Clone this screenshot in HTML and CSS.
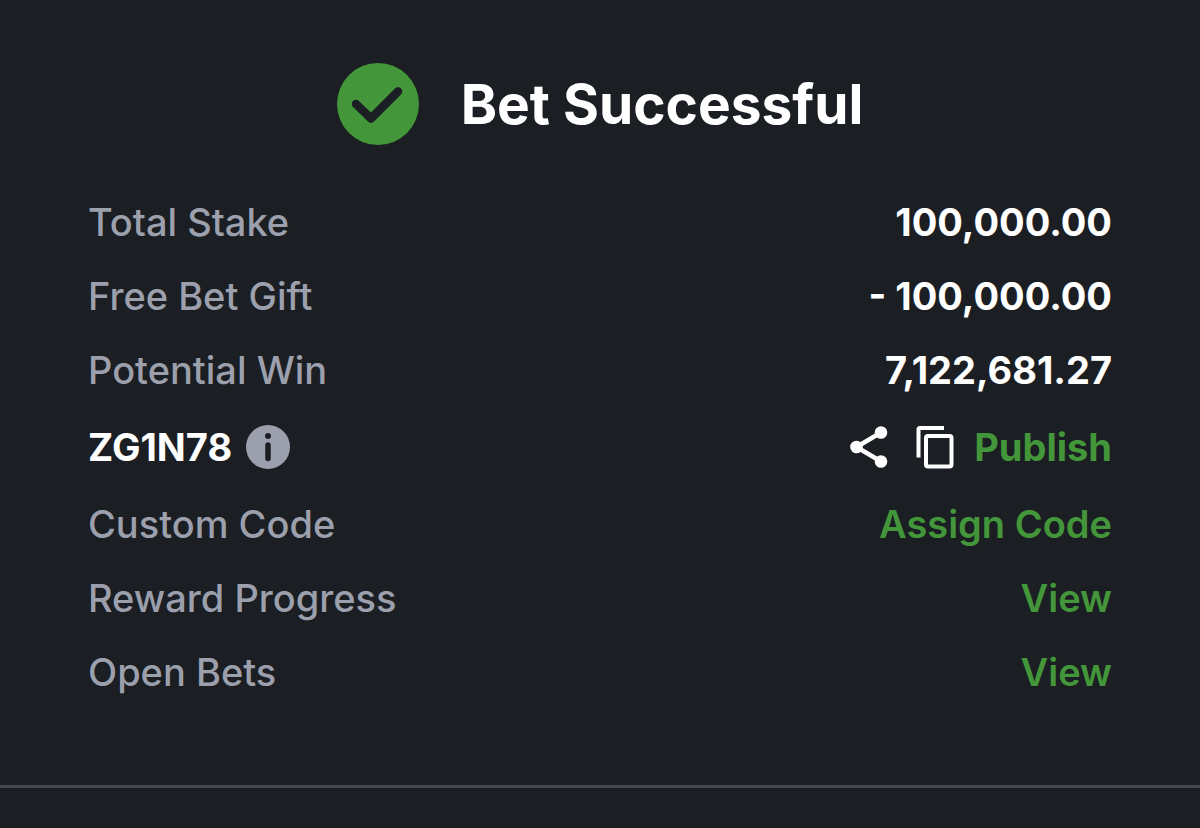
FILE: index.html
```html
<!DOCTYPE html>
<html lang="en">
<head>
<meta charset="utf-8">
<meta name="viewport" content="width=device-width, initial-scale=1">
<title>Bet Successful</title>
<link rel="stylesheet" href="styles.css">
</head>
<body>
<main class="receipt">
  <header class="heading">
    <svg class="heading-icon" viewBox="0 0 82 82" aria-hidden="true">
      <circle cx="41" cy="41" r="41" fill="#439639"/>
      <path d="M19 41 L34 55.500 L61 28.500" fill="none" stroke="#1b1e23" stroke-width="8.500" stroke-linecap="round" stroke-linejoin="round"/>
    </svg>
    <h1 class="title">Bet Successful</h1>
  </header>
  <dl class="details">
    <div class="row"><dt class="label">Total Stake</dt><dd class="value">100,000.00</dd></div>
    <div class="row"><dt class="label">Free Bet Gift</dt><dd class="value">- 100,000.00</dd></div>
    <div class="row"><dt class="label">Potential Win</dt><dd class="value">7,122,681.27</dd></div>
    <div class="row row-code">
      <dt class="code">ZG1N78
        <button class="icon-button" type="button" aria-label="About booking code">
          <svg width="44" height="44" viewBox="0 0 44 44"><circle cx="22" cy="22" r="22" fill="#9ca0ad"/><circle cx="22" cy="11" r="3" fill="#1b1e23"/><path d="M22 20v13.500" fill="none" stroke="#1b1e23" stroke-width="5.500" stroke-linecap="round"/></svg>
        </button>
      </dt>
      <dd class="value actions">
        <button class="icon-button" type="button" aria-label="Share">
          <svg width="38" height="42" viewBox="0 0 38 42"><path d="M31 6.500 L6.500 21 L31 35.500" fill="none" stroke="#fff" stroke-width="4.500"/><g fill="#fff"><circle cx="31" cy="6.500" r="6.300"/><circle cx="6.500" cy="21" r="6.300"/><circle cx="31" cy="35.500" r="6.300"/></g></svg>
        </button>
        <button class="icon-button copy" type="button" aria-label="Copy">
          <svg width="38" height="44" viewBox="0 0 38 44"><path d="M2.500 32.500V4.500Q2.500 3 4 3H28" fill="none" stroke="#fff" stroke-width="4"/><rect x="10" y="11" width="25.500" height="30.500" rx="2" fill="none" stroke="#fff" stroke-width="4"/></svg>
        </button>
        <a class="link" href="#publish">Publish</a>
      </dd>
    </div>
    <div class="row"><dt class="label">Custom Code</dt><dd class="value"><a class="link" href="#assign">Assign Code</a></dd></div>
    <div class="row"><dt class="label">Reward Progress</dt><dd class="value"><a class="link" href="#reward">View</a></dd></div>
    <div class="row"><dt class="label">Open Bets</dt><dd class="value"><a class="link" href="#bets">View</a></dd></div>
  </dl>
</main>
</body>
</html>
```
FILE: styles.css
```css
* { box-sizing: border-box; }
body { margin: 0; min-height: 100vh; background: #1b1e23; color: #fff; font-family: Inter, "Liberation Sans", sans-serif; }
.receipt { padding: 63px 88px 76px; border-bottom: 3px solid #444652; }
.heading { display: flex; align-items: center; justify-content: center; gap: 42px; }
.heading-icon { width: 82px; height: 82px; }
.title { margin: 0; font-size: 55px; line-height: 68px; font-weight: 700; }
.details { margin: 40px 0 0; }
.row { display: flex; align-items: center; justify-content: space-between; min-height: 74px; font-size: 38px; line-height: 46px; }
.row-code { min-height: 80px; }
.label { color: #9ca0ad; font-weight: 500; }
.value { margin: 0; font-weight: 700; }
.code { display: flex; align-items: center; gap: 14px; font-weight: 700; }
.actions { display: flex; align-items: center; gap: 20px; }
.copy { margin-left: 8px; }
.icon-button { display: flex; padding: 0; border: 0; background: none; cursor: pointer; }
.link { color: #439639; font-weight: 600; text-decoration: none; }
.actions .link { font-weight: 700; }
```
